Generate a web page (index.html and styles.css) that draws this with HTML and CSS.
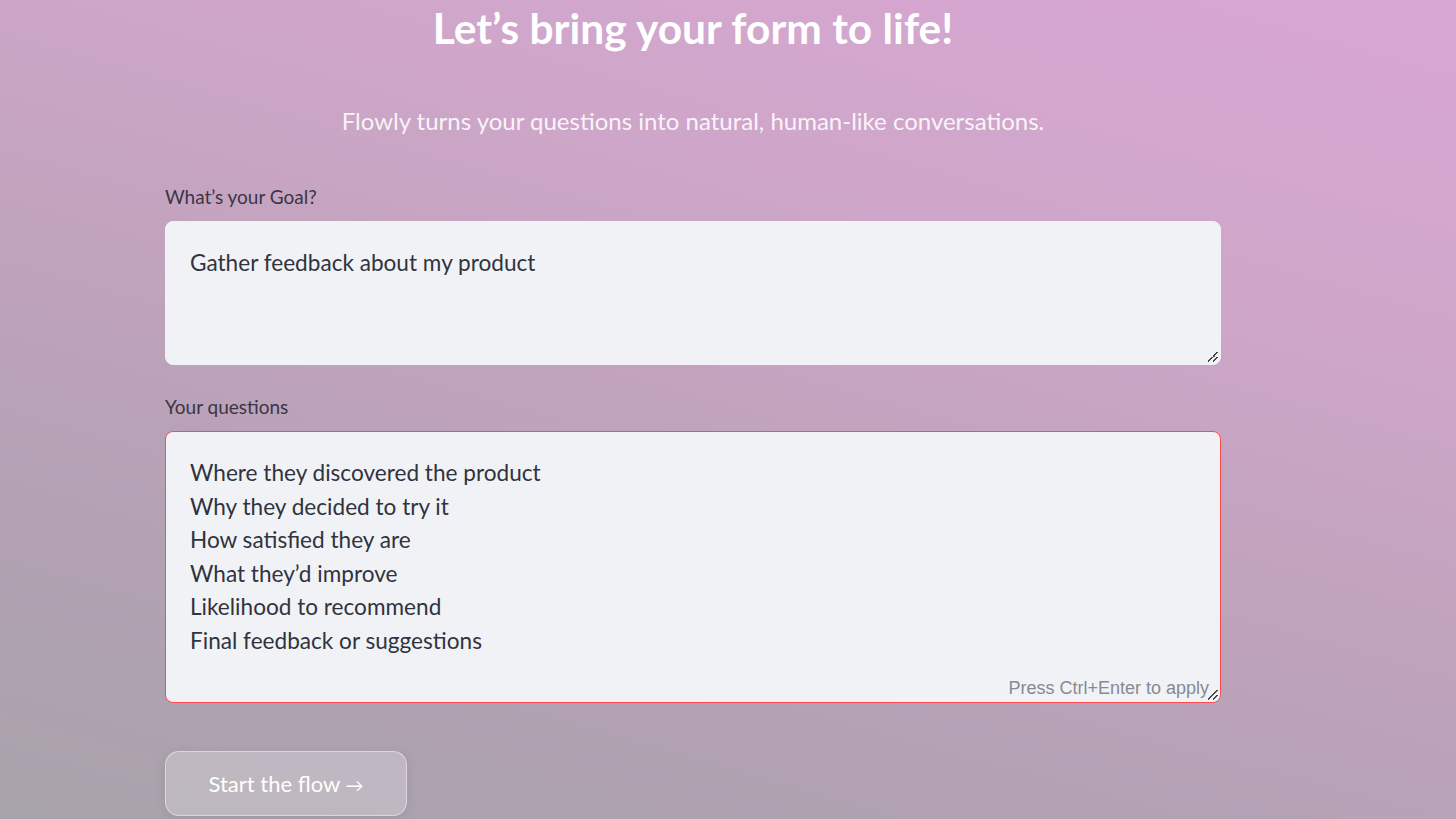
FILE: index.html
```html
<!DOCTYPE html>
<html lang="en">
<head>
<meta charset="utf-8">
<title>Flowly</title>
<link rel="stylesheet" href="styles.css">
</head>
<body>
<main class="page">
  <div class="column">
    <h1 class="title">Let’s bring your form to life!</h1>
    <p class="subtitle">Flowly turns your questions into natural, human-like conversations.</p>

    <div class="field">
      <label class="label" for="goal">What’s your Goal?</label>
      <div class="box box-goal">
        <div class="box-text" id="goal">Gather feedback about my product</div>
        <span class="grip"></span>
      </div>
    </div>

    <div class="field">
      <label class="label" for="questions">Your questions</label>
      <div class="box box-questions">
        <div class="box-text" id="questions">Where they discovered the product<br>Why they decided to try it<br>How satisfied they are<br>What they’d improve<br>Likelihood to recommend<br>Final feedback or suggestions</div>
        <span class="hint">Press Ctrl+Enter to apply</span>
        <span class="grip"></span>
      </div>
    </div>

    <button class="start" type="button">Start the flow <span class="arrow">→</span></button>
  </div>
</main>
</body>
</html>
```
FILE: styles.css
```css
* { box-sizing: border-box; }
html, body { margin: 0; padding: 0; }
body {
  font-family: Lato, "Noto Sans", sans-serif;
  min-height: 100vh;
  background: linear-gradient(196deg, #d9a7d4 0%, #cfa6ca 28%, #c0a3bc 52%, #b2a1b3 76%, #a8a3aa 100%);
}
.page {
  min-height: 100vh;
  padding: 0 0 0 165px;
}
.column {
  width: 1056px;
  display: flex;
  flex-direction: column;
}
.title {
  margin: 0;
  padding-top: 0;
  text-align: center;
  font-size: 42.5px;
  line-height: 56px;
  font-weight: 700;
  color: #ffffff;
}
.subtitle {
  margin: 48px 0 0;
  text-align: center;
  font-size: 24px;
  line-height: 34px;
  color: rgba(255,255,255,0.9);
}
.field { display: flex; flex-direction: column; }
.field:first-of-type { margin-top: 45px; }
.label {
  font-size: 19px;
  line-height: 28px;
  color: #3b3545;
  margin-bottom: 10px;
}
.box {
  position: relative;
  background: #f0f2f6;
  border: 1px solid #f0f2f6;
  border-radius: 8px;
}
.box-goal { height: 144px; margin-bottom: 28px; }
.box-questions { height: 272px; border-color: #ff4b4b; }
.box-text {
  padding: 24px 24px;
  font-size: 22.6px;
  line-height: 33.6px;
  color: #31333f;
}
.grip {
  position: absolute;
  right: 2px;
  bottom: 2px;
  width: 10px;
  height: 10px;
  background:
    linear-gradient(135deg, transparent 45%, #444 45%, #444 55%, transparent 55%) no-repeat;
}
.grip::after {
  content: "";
  position: absolute;
  right: 0; bottom: 0;
  width: 5px; height: 5px;
  background: linear-gradient(135deg, transparent 40%, #444 40%, #444 60%, transparent 60%);
}
.hint {
  position: absolute;
  right: 11px;
  bottom: 3px;
  font-family: "Liberation Sans", Arial, sans-serif;
  font-size: 18px;
  color: #878a91;
}
.start {
  align-self: flex-start;
  margin-top: 48px;
  width: 242px;
  height: 65px;
  border-radius: 14px;
  border: 1px solid rgba(255,255,255,0.45);
  background: rgba(236,232,238,0.3);
  box-shadow: 0 2px 10px rgba(80,60,90,0.12);
  color: #ffffff;
  font-family: Lato, "Noto Sans", sans-serif;
  font-size: 22px;
  cursor: pointer;
}
.arrow { font-size: 18px; }
```
